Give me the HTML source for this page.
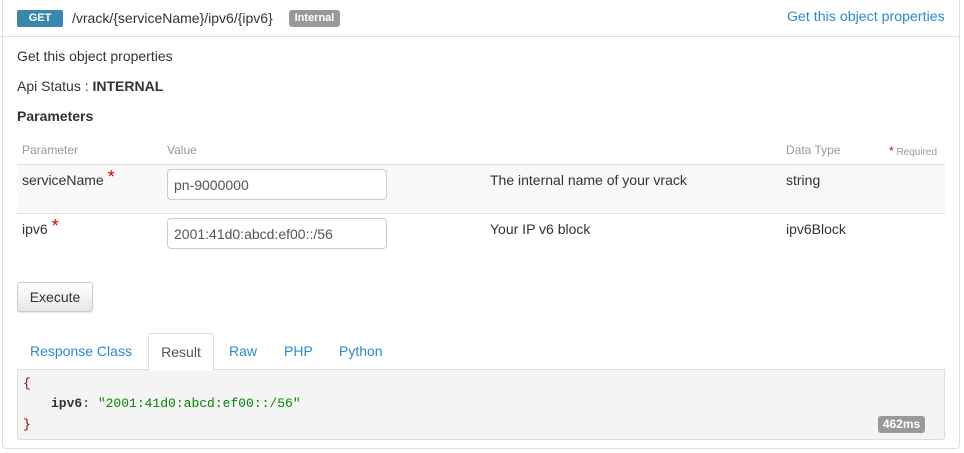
<!DOCTYPE html>
<html><head><style>
*{box-sizing:border-box;margin:0;padding:0}
body{width:964px;height:453px;background:#fff;font-family:"Liberation Sans",sans-serif;font-size:14px;color:#333;position:relative;overflow:hidden}
.box{position:absolute;left:2px;top:-4px;width:958px;height:453px;border:1px solid #ddd;border-radius:4px}
.hdr{position:absolute;left:0;top:0;width:960px;height:37px;border-bottom:1px solid #ddd}
.a{position:absolute;white-space:nowrap}
.get{left:17px;top:10px;width:46px;height:17px;background:#3a87ad;color:#fff;font-size:11px;font-weight:bold;text-align:center;line-height:17px;border-radius:2px}
.int{left:289px;top:10px;width:51px;height:17px;background:#999;color:#fff;font-size:11px;font-weight:bold;text-align:center;line-height:17px;border-radius:3px}
.blue{color:#2a8ccd}
.gray{color:#999;font-size:12px}
.row{position:absolute;left:17px;width:928px;border-top:1px solid #ddd}
input{position:absolute;left:167px;width:220px;height:31px;border:1px solid #ccc;border-radius:4px;font-family:"Liberation Sans",sans-serif;font-size:14px;color:#555;padding:0 6px;background:#fff}
.star{color:#d00;font-size:18px;position:relative;top:-2px;line-height:10px}
.btn{left:17px;top:282px;width:76px;height:30px;border:1px solid #ccc;border-radius:3px;background:linear-gradient(#fff,#e6e6e6);text-align:center;line-height:28px;box-shadow:0 1px 1px rgba(0,0,0,.1)}
.tab{top:333px;height:37px;line-height:36px;font-size:14px}
.code{position:absolute;left:17px;top:369px;width:928px;height:71px;background:#f4f4f4;border:1px solid #ddd;border-radius:0 0 3px 3px;font-family:"Liberation Mono",monospace;font-size:13px}
</style></head><body>
<div class="box"></div>
<div class="hdr"></div>
<div class="a get">GET</div>
<div class="a" style="left:72px;top:10px">/vrack/{serviceName}/ipv6/{ipv6}</div>
<div class="a int">Internal</div>
<div class="a blue" style="left:787px;top:9px;font-size:14.2px">Get this object properties</div>
<div class="a" style="left:17px;top:48px">Get this object properties</div>
<div class="a" style="left:17px;top:78px">Api Status : <b>INTERNAL</b></div>
<div class="a" style="left:17px;top:108px;font-weight:bold">Parameters</div>
<div class="a gray" style="left:22px;top:143px">Parameter</div>
<div class="a gray" style="left:167px;top:143px">Value</div>
<div class="a gray" style="left:786px;top:143px">Data Type</div>
<div class="a gray" style="left:889px;top:144px;font-size:10px"><span style="color:#d00;font-size:12px">*</span> Required</div>
<div class="row" style="top:164px;height:49px;background:#f9f9f9"></div>
<div class="row" style="top:213px;height:49px"></div>
<div class="a" style="left:22px;top:172px">serviceName <span class="star">*</span></div>
<input style="top:169px" value="pn-9000000">
<div class="a" style="left:490px;top:172px">The internal name of your vrack</div>
<div class="a" style="left:786px;top:172px">string</div>
<div class="a" style="left:22px;top:221px">ipv6 <span class="star">*</span></div>
<input style="top:218px" value="2001:41d0:abcd:ef00::/56">
<div class="a" style="left:490px;top:221px">Your IP v6 block</div>
<div class="a" style="left:786px;top:221px">ipv6Block</div>
<div class="a btn">Execute</div>
<div class="a tab blue" style="left:30px">Response Class</div>
<div class="a tab" style="left:148px;width:66px;border:1px solid #ddd;border-bottom:none;border-radius:3px 3px 0 0;background:#fff;text-align:center;color:#555;height:38px;z-index:2">Result</div>
<div class="a tab blue" style="left:229px">Raw</div>
<div class="a tab blue" style="left:284px">PHP</div>
<div class="a tab blue" style="left:339px">Python</div>
<div class="code">
<div class="a" style="left:5px;top:6px;color:#800">{</div>
<div class="a" style="left:33px;top:26px"><b style="color:#333">ipv6</b>: <span style="color:#080">"2001:41d0:abcd:ef00::/56"</span></div>
<div class="a" style="left:5px;top:47px;color:#800">}</div>
<div class="a" style="left:860px;top:46px;width:47px;height:17px;background:#999;color:#fff;font-family:'Liberation Sans',sans-serif;font-size:12px;font-weight:bold;text-align:center;line-height:17px;border-radius:3px">462ms</div>
</div>
</body></html>
